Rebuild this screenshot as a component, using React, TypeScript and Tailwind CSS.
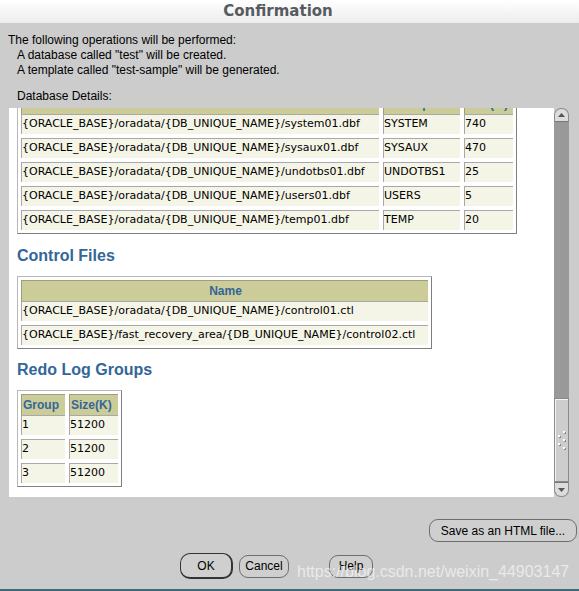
import clsx from "clsx";

type Col = { w: string; label: string; center?: boolean };

const DATAFILES = [
  ["{ORACLE_BASE}/oradata/{DB_UNIQUE_NAME}/system01.dbf", "SYSTEM", "740"],
  ["{ORACLE_BASE}/oradata/{DB_UNIQUE_NAME}/sysaux01.dbf", "SYSAUX", "470"],
  ["{ORACLE_BASE}/oradata/{DB_UNIQUE_NAME}/undotbs01.dbf", "UNDOTBS1", "25"],
  ["{ORACLE_BASE}/oradata/{DB_UNIQUE_NAME}/users01.dbf", "USERS", "5"],
  ["{ORACLE_BASE}/oradata/{DB_UNIQUE_NAME}/temp01.dbf", "TEMP", "20"],
];

const CONTROL = [
  ["{ORACLE_BASE}/oradata/{DB_UNIQUE_NAME}/control01.ctl"],
  ["{ORACLE_BASE}/fast_recovery_area/{DB_UNIQUE_NAME}/control02.ctl"],
];

const REDO = [
  ["1", "51200"],
  ["2", "51200"],
  ["3", "51200"],
];

function Table({ cols, rows }: { cols: Col[]; rows: string[][] }) {
  return (
    <div className="w-fit border border-t-[#b8b8b8] border-l-[#b8b8b8] border-r-[#808080] border-b-[#808080] bg-white p-[3px]">
      <div className="flex gap-[4px]">
        {cols.map((c) => (
          <div
            key={c.label}
            className={clsx(
              "h-[21px] shrink-0 overflow-hidden whitespace-nowrap border-t border-l border-[#9e9e7c] bg-[#cccc99] pl-[1px] text-[12px] font-bold leading-[20px] text-[#336699]",
              c.w,
              c.center && "text-center"
            )}
          >
            {c.label}
          </div>
        ))}
      </div>
      <div className="flex flex-col gap-[4px]">
        {rows.map((r, i) => (
          <div key={i} className="flex gap-[4px]">
            {r.map((v, j) => (
              <div
                key={j}
                className={clsx(
                  "h-[20px] shrink-0 overflow-hidden whitespace-nowrap border-t border-l border-[#a8a8a8] bg-[#f5f5e7] font-['DejaVu_Sans',sans-serif] text-[11px] leading-[18px] text-black",
                  cols[j].w
                )}
              >
                {v}
              </div>
            ))}
          </div>
        ))}
      </div>
    </div>
  );
}

function Scrollbar() {
  return (
    <div className="flex w-[15px] shrink-0 flex-col">
      <div className="flex h-[14px] items-center justify-center rounded-t-[7px] border border-b-[#777] border-[#8c8c8c] bg-[#dcdcdc]">
        <svg width="7" height="4" viewBox="0 0 7 4">
          <path d="M0 4 L3.5 0 L7 4 Z" fill="#555" />
        </svg>
      </div>
      <div className="flex-1 bg-[#999999]" />
      <div className="flex h-[84px] items-center justify-center border border-[#8a8a8a] bg-[#cdcdcd] shadow-[inset_1px_1px_0_#f4f4f4]">
        <svg width="8" height="19" viewBox="0 0 8 19">
          {[
            [5, 0],
            [0, 4],
            [5, 8],
            [0, 12],
            [5, 16],
          ].map(([x, y], i) => (
            <g key={i}>
              <rect x={x + 1} y={y + 1} width="2" height="2" fill="#8a8a8a" />
              <rect x={x} y={y} width="2" height="2" fill="#ffffff" />
            </g>
          ))}
        </svg>
      </div>
      <div className="flex h-[15px] items-center justify-center rounded-b-[7px] border border-t-[#777] border-[#8c8c8c] bg-[#dcdcdc]">
        <svg width="7" height="4" viewBox="0 0 7 4">
          <path d="M0 0 L3.5 4 L7 0 Z" fill="#555" />
        </svg>
      </div>
    </div>
  );
}

function Heading({ children, className }: { children: string; className?: string }) {
  return (
    <div className={clsx("text-[16px] font-bold leading-[20px] text-[#336699]", className)}>
      {children}
    </div>
  );
}

export default function App() {
  return (
    <div className="relative flex h-[591px] w-[579px] flex-col overflow-hidden bg-[#cccccc] font-['Liberation_Sans',Arial,sans-serif] text-black">
      <div className="h-[23px] shrink-0 bg-linear-to-b from-white to-[#ececec] pr-[23px] text-center font-['DejaVu_Sans',sans-serif] text-[15px] font-bold leading-[23px] text-[#555b61]">
        Confirmation
      </div>

      <div className="pl-[8px] pt-[10px] text-[12px] leading-[15px]">
        <div>The following operations will be performed:</div>
        <div className="pl-[9px]">A database called "test" will be created.</div>
        <div className="pl-[9px]">A template called "test-sample" will be generated.</div>
        <div className="mt-[11px] pl-[9px]">Database Details:</div>
      </div>

      <div className="ml-[9px] mt-[4px] flex h-[389px] w-[560px] shrink-0">
        <div className="flex-1 overflow-hidden bg-white pl-[8px]">
          <div className="-mt-[19px]">
            <Table
              cols={[
                { w: "w-[358px]", label: "Name", center: true },
                { w: "w-[77px]", label: "Tablespace" },
                { w: "w-[49px]", label: "Size(M)" },
              ]}
              rows={DATAFILES}
            />
          </div>
          <Heading className="mt-[12px]">Control Files</Heading>
          <div className="mt-[10px]">
            <Table cols={[{ w: "w-[407px]", label: "Name", center: true }]} rows={CONTROL} />
          </div>
          <Heading className="mt-[11px]">Redo Log Groups</Heading>
          <div className="mt-[10px]">
            <Table
              cols={[
                { w: "w-[44px]", label: "Group" },
                { w: "w-[49px]", label: "Size(K)" },
              ]}
              rows={REDO}
            />
          </div>
        </div>
        <Scrollbar />
      </div>

      <div className="mt-[22px] flex justify-end pr-[2px]">
        <button className="h-[23px] w-[148px] rounded-[9px] border border-[#6e6e6e] bg-[#cfcfcf] text-[12px] text-black">
          Save as an HTML file...
        </button>
      </div>

      <div className="mt-[11px] flex items-center pl-[180px]">
        <button className="h-[26px] w-[53px] rounded-[10px] border border-r-2 border-b-2 border-[#333] bg-[#cfcfcf] text-[12px] text-black">
          OK
        </button>
        <button className="ml-[6px] h-[23px] w-[50px] rounded-[9px] border border-[#6e6e6e] bg-[#cfcfcf] text-[12px] text-black">
          Cancel
        </button>
        <button className="ml-[40px] h-[23px] w-[44px] rounded-[9px] border border-[#6e6e6e] bg-[#cfcfcf] text-[12px] text-black">
          Help
        </button>
      </div>

      <div className="mt-auto h-[2px] shrink-0 bg-[#3c6a78]" />

      <div className="pointer-events-none absolute left-[297px] top-[562px] whitespace-nowrap text-[16px] leading-[20px] text-white/60">
        https://blog.csdn.net/weixin_44903147
      </div>
    </div>
  );
}
